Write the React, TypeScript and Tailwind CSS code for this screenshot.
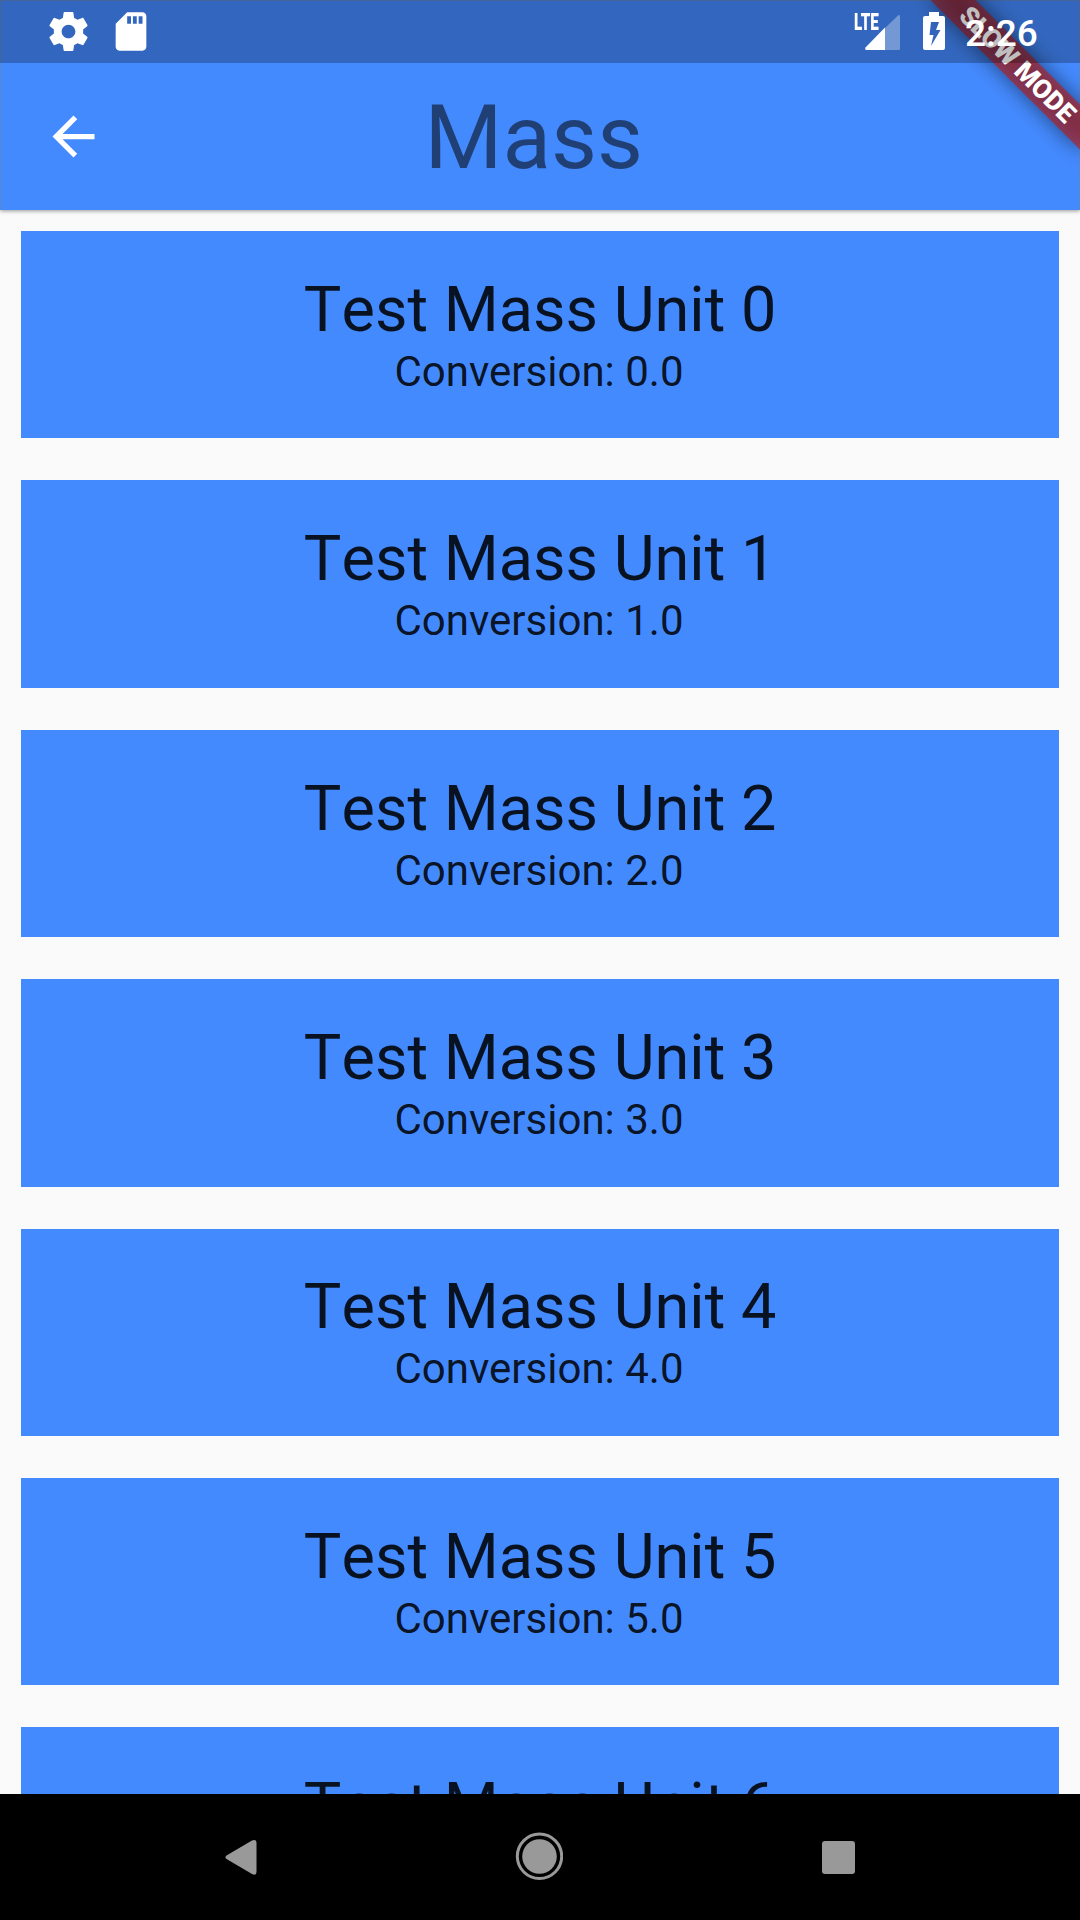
import React from "react";

const units = [0, 1, 2, 3, 4, 5, 6];

function StatusBar() {
  return (
    <div className="absolute inset-x-0 top-0 z-20 flex h-[63px] items-start bg-black/25 text-white">
      <svg className="ml-[45px] mt-[8px] h-[47px] w-[47px]" viewBox="0 0 24 24" fill="currentColor">
        <path d="M19.43 12.98c.04-.32.07-.64.07-.98s-.03-.66-.07-.98l2.11-1.65c.19-.15.24-.42.12-.64l-2-3.46c-.12-.22-.39-.3-.61-.22l-2.49 1c-.52-.4-1.08-.73-1.69-.98l-.38-2.65C14.46 2.18 14.25 2 14 2h-4c-.25 0-.46.18-.49.42l-.38 2.65c-.61.25-1.17.59-1.69.98l-2.49-1c-.23-.09-.49 0-.61.22l-2 3.46c-.13.22-.07.49.12.64l2.11 1.65c-.04.32-.07.65-.07.98s.03.66.07.98l-2.11 1.65c-.19.15-.24.42-.12.64l2 3.46c.12.22.39.3.61.22l2.49-1c.52.4 1.08.73 1.69.98l.38 2.65c.03.24.24.42.49.42h4c.25 0 .46-.18.49-.42l.38-2.65c.61-.25 1.17-.59 1.69-.98l2.49 1c.23.09.49 0 .61-.22l2-3.46c.12-.22.07-.49-.12-.64l-2.11-1.65zM12 15.5c-1.93 0-3.5-1.57-3.5-3.5s1.57-3.5 3.5-3.5 3.5 1.57 3.5 3.5-1.57 3.5-3.5 3.5z" />
      </svg>
      <svg className="ml-[16px] mt-[8px] h-[47px] w-[46px]" viewBox="0 0 24 24" fill="currentColor">
        <path d="M18 2h-8L4.02 8 4 20c0 1.100.9 2 2 2h12c1.100 0 2-.9 2-2V4c0-1.100-.9-2-2-2zm-6 6h-2V4h2v4zm3 0h-2V4h2v4zm3 0h-2V4h2v4z" />
      </svg>
      <div className="relative ml-[699px] mt-[12px] h-[40px] w-[48px]">
        <svg className="h-full w-full" viewBox="0 0 48 40" fill="none">
          <path d="M45.500 3 Q47 2.500 47 4.500 V36.500 Q47 38 45.500 38 H32 V16 Z" fill="#fff" fillOpacity=".32" />
          <path d="M32 15.500 V38 H13.500 Q11.500 37.500 12.500 35.500 Z" fill="#fff" />
        </svg>
        <span className="absolute left-[0.5px] -top-[1px] origin-left scale-x-[0.66] text-[23px] font-black leading-[24px]">
          LTE
        </span>
      </div>
      <svg className="ml-[22px] mt-[12px] h-[39px] w-[22px]" viewBox="0 0 22 39">
        <path
          fill="#fff"
          fillRule="evenodd"
          d="M6 0H16V4H20Q22 4 22 6V36Q22 38 20 38H2Q0 38 0 36V6Q0 4 2 4H6Z M8 10L6.500 23H10.500L8 34L17.500 18H13L16 10Z"
        />
      </svg>
      <span className="ml-[20px] mt-[10px] text-[37px] font-medium leading-[47px]">2:26</span>
    </div>
  );
}

function Banner() {
  return (
    <div className="absolute left-[975px] top-[73.5px] z-10 h-[31.5px] w-[210px] origin-[105px_-73.5px] rotate-45">
      <div className="absolute inset-0 bg-black/50 blur-[10.4px]" />
      <div className="absolute inset-0 flex items-center justify-center whitespace-nowrap bg-[#b71c1c]/63 pl-[2px] text-[26.5px] font-black leading-none text-white">
        SLOW MODE
      </div>
    </div>
  );
}

function UnitCard({ n }: { n: number }) {
  return (
    <div className="h-[207.375px] shrink-0 bg-[#448aff] pt-[41.8px] text-center text-black/87">
      <div className="text-[63px] leading-[73.5px]">
        <span className="tracking-[0.3px]">T</span>est Mass Unit {n}
      </div>
      <div className="pr-[2px] pt-[0.5px] text-[42px] leading-[49.875px]">Conversion: {n}.0</div>
    </div>
  );
}

export default function App() {
  return (
    <div className="relative flex h-[1920px] w-[1080px] flex-col overflow-hidden bg-[#fafafa] font-['Roboto',sans-serif]">
      <StatusBar />
      <Banner />
      <header className="relative flex h-[210px] shrink-0 items-center bg-[#448aff] pt-[63px] shadow-[0_1px_4px_rgba(0,0,0,0.4)]">
        <div className="absolute inset-0 border border-b-0 border-[#808080]/40" />
        <svg className="ml-[42px] h-[63px] w-[63px]" viewBox="0 0 24 24" fill="#fff">
          <path d="M20 11H7.830l5.590-5.590L12 4l-8 8 8 8 1.410-1.410L7.830 13H20v-2z" />
        </svg>
        <h1 className="ml-[319.5px] pt-[2px] text-[89.25px] leading-[105px] text-black/54">Mass</h1>
      </header>
      <main className="flex min-h-0 flex-1 flex-col gap-[42px] overflow-hidden px-[21px] pt-[21px]">
        {units.map((n) => (
          <UnitCard key={n} n={n} />
        ))}
      </main>
      <nav className="flex h-[126px] shrink-0 bg-black">
        <svg className="ml-[225px] mt-[45px] h-[37px] w-[32px]" viewBox="0 0 32 37">
          <path d="M1.500 16.500L27 1.500Q31.500 0 31.500 4V33Q31.500 37 27 35L1.500 20Q-.5 18.200 1.500 16.500Z" fill="#999" />
        </svg>
        <svg className="ml-[258px] mt-[38px] h-[48px] w-[48px]" viewBox="0 0 48 48">
          <circle cx="24.500" cy="24.300" r="22.200" fill="none" stroke="#999" strokeWidth="3" />
          <circle cx="24.500" cy="24.500" r="17.300" fill="#999" />
        </svg>
        <div className="ml-[259px] mt-[46.500px] h-[33px] w-[33px] rounded-[3px] bg-[#999]" />
      </nav>
    </div>
  );
}
